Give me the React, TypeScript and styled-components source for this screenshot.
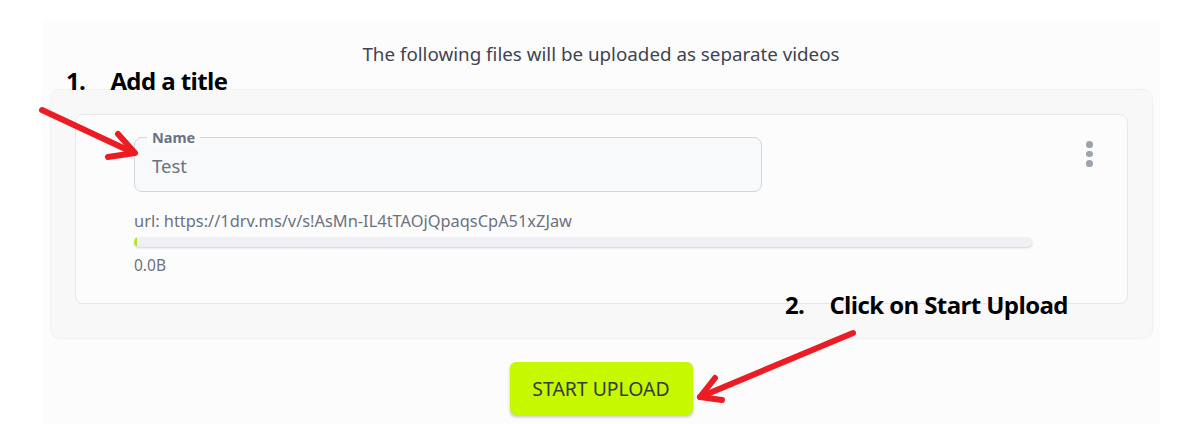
import styled, { createGlobalStyle } from "styled-components";

const Global = createGlobalStyle`
  body {
    margin: 0;
    background: #ffffff;
    font-family: "Noto Sans", "Open Sans", sans-serif;
  }
`;

const Page = styled.div`
  position: relative;
  width: 1180px;
  height: 424px;
  overflow: hidden;
  padding: 20px 20px 0 42px;
  box-sizing: border-box;
`;

const Section = styled.section`
  background: #fcfcfc;
  height: 100%;
  display: flex;
  flex-direction: column;
  align-items: center;
`;

const Heading = styled.p`
  margin: 22px 0 0;
  height: 24px;
  line-height: 24px;
  font-size: 18.8px;
  color: #3f4450;
`;

const Panel = styled.div`
  align-self: stretch;
  margin: 23px 7px 0 8px;
  padding: 24px 24px 34px 24px;
  background: #f8f8f8;
  border: 1px solid #f1f1f1;
  border-radius: 10px;
`;

const Card = styled.div`
  display: flex;
  justify-content: space-between;
  height: 190px;
  box-sizing: border-box;
  padding: 22px 34px 0 58px;
  background: #fcfcfc;
  border: 1px solid #e8e8ea;
  border-radius: 8px;
`;

const Body = styled.div`
  display: flex;
  flex-direction: column;
`;

const Field = styled.div`
  position: relative;
  width: 628px;
  height: 55px;
  box-sizing: border-box;
  border: 1px solid #d3d6dc;
  border-radius: 8px;
  background: #f8f9fa;
  display: flex;
  align-items: center;
  padding: 2px 17px 0;
`;

const Label = styled.span`
  position: absolute;
  top: -9px;
  left: 12px;
  padding: 0 5px;
  background: #fcfcfc;
  font-size: 14.5px;
  line-height: 16px;
  font-weight: 700;
  color: #6b7280;
`;

const Value = styled.span`
  font-size: 18.5px;
  color: #6b7280;
`;

const Url = styled.div`
  margin-top: 19px;
  font-size: 16.4px;
  line-height: 20px;
  color: #6b7280;
`;

const Track = styled.div`
  margin-top: 6px;
  width: 898px;
  height: 10px;
  border-radius: 6px;
  background: #eef0f3;
  box-shadow: 0 1px 2px rgba(120, 130, 150, 0.35);
  overflow: hidden;
`;

const Fill = styled.div`
  height: 100%;
  background: #b7e32a;
`;

const Size = styled.div`
  margin-top: 8px;
  font-size: 15.5px;
  line-height: 20px;
  color: #6b7280;
`;

const Kebab = styled.button`
  display: flex;
  flex-direction: column;
  gap: 3px;
  height: 26px;
  margin-top: 4px;
  padding: 0;
  border: none;
  background: none;
  span {
    width: 7px;
    height: 7px;
    border-radius: 50%;
    background: #9ca3af;
  }
`;

const Upload = styled.button`
  margin-top: 23px;
  width: 183px;
  height: 53px;
  border: none;
  border-radius: 6px;
  background: #c6f800;
  box-shadow: 0 2px 3px rgba(60, 70, 90, 0.3);
  font-family: "Noto Sans", "Open Sans", sans-serif;
  font-size: 19.4px;
  color: #353a46;
`;

const Note = styled.div<{ $x: number; $y: number }>`
  position: absolute;
  left: ${(p) => p.$x}px;
  top: ${(p) => p.$y}px;
  display: flex;
  gap: 25px;
  font-family: "Open Sans", "Noto Sans", sans-serif;
  font-weight: 700;
  font-size: 24px;
  letter-spacing: -0.6px;
  line-height: 28px;
  color: #000;
`;

const Arrows = styled.svg`
  position: absolute;
  left: 0;
  top: 0;
  pointer-events: none;
`;

export default function App() {
  return (
    <>
      <Global />
      <Page>
        <Section>
          <Heading>The following files will be uploaded as separate videos</Heading>
          <Panel>
            <Card>
              <Body>
                <Field>
                  <Label>Name</Label>
                  <Value>Test</Value>
                </Field>
                <Url>url: https://1drv.ms/v/s!AsMn-IL4tTAOjQpaqsCpA51xZJaw</Url>
                <Track>
                  <Fill style={{ width: "0.3%" }} />
                </Track>
                <Size>0.0B</Size>
              </Body>
              <Kebab aria-label="more">
                <span />
                <span />
                <span />
              </Kebab>
            </Card>
          </Panel>
          <Upload>START UPLOAD</Upload>
        </Section>
        <Note $x={66} $y={67}>
          <span>1.</span>
          <span>Add a title</span>
        </Note>
        <Note $x={785} $y={291}>
          <span>2.</span>
          <span>Click on Start Upload</span>
        </Note>
        <Arrows width="1180" height="424" viewBox="0 0 1180 424">
          <g stroke="#ec1c24" strokeWidth="6" strokeLinecap="round" strokeLinejoin="round" fill="none">
            <path d="M42 110 L134 153" />
            <path d="M118 134 L135 153 L108 157" />
            <path d="M853 333 L700 397" />
            <path d="M715 378 L700 397 L722 400" />
          </g>
        </Arrows>
      </Page>
    </>
  );
}
